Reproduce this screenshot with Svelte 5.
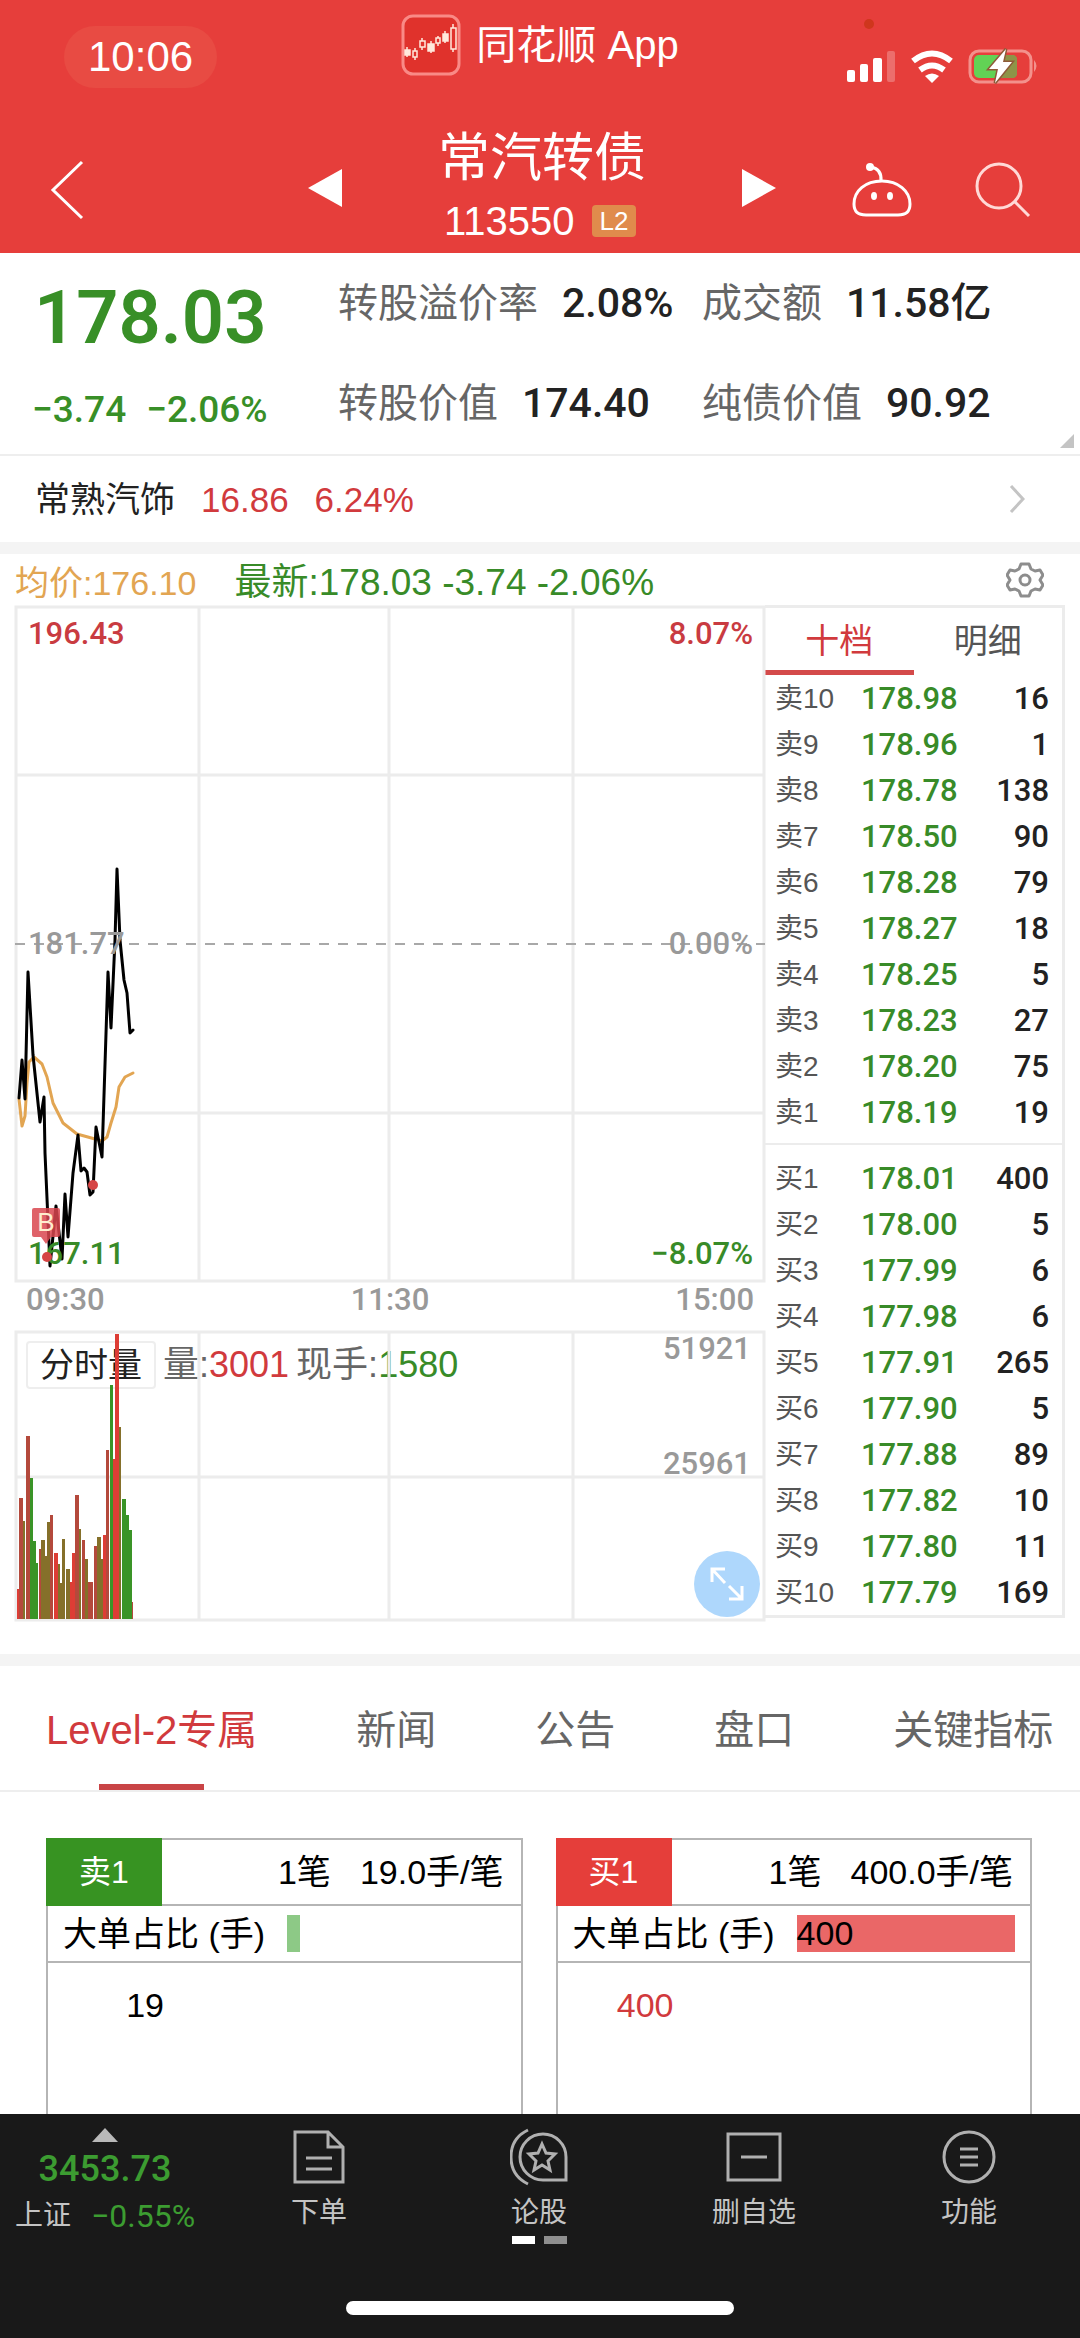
<script lang="ts">
    type Level = [string, string, number]

    const sells: Level[] = [
        ['卖10', '178.98', 16],
        ['卖9', '178.96', 1],
        ['卖8', '178.78', 138],
        ['卖7', '178.50', 90],
        ['卖6', '178.28', 79],
        ['卖5', '178.27', 18],
        ['卖4', '178.25', 5],
        ['卖3', '178.23', 27],
        ['卖2', '178.20', 75],
        ['卖1', '178.19', 19],
    ]

    const buys: Level[] = [
        ['买1', '178.01', 400],
        ['买2', '178.00', 5],
        ['买3', '177.99', 6],
        ['买4', '177.98', 6],
        ['买5', '177.91', 265],
        ['买6', '177.90', 5],
        ['买7', '177.88', 89],
        ['买8', '177.82', 10],
        ['买9', '177.80', 11],
        ['买10', '177.79', 169],
    ]

    // price line and average line, in chart units
    const price = '4,492 7,454 10,493 13,366 18,449 25,516 29,491 30,547 35,660 41,600 47,653 50,588 53,631 58,567 63,529 66,565 69,562 72,566 75,589 78,586 81,521 87,551 93,366 96,422 100,334 102,263 105,334 109,374 112,387 115,427 118,424'
    const average = '4,493 7,520 10,510 12,477 14,456 19,451 27,458 32,471 38,497 48,517 62,528 80,533 87,535 92,531 96,517 101,501 104,481 110,471 118,467'

    const r = '#dd3d35'
    const g = '#3a9427'
    const o = '#85702a'
    const b = '#b4493c'

    // x, width, height, colour
    const bars: [number, number, number, string][] = [
        [2, 2, 30, r], [4, 4, 121, b], [8, 2, 98, o], [11, 4, 183, b], [15, 3, 141, g],
        [18, 3, 78, g], [21, 2, 56, g], [24, 2, 70, b], [26, 4, 79, o], [30, 2, 63, o],
        [32, 3, 97, o], [35, 3, 104, b], [39, 4, 66, r], [43, 2, 55, o], [45, 2, 36, o],
        [47, 3, 80, o], [51, 4, 50, o], [55, 2, 37, r], [57, 3, 66, r], [60, 4, 124, b],
        [64, 2, 90, o], [67, 3, 79, b], [70, 3, 60, o], [73, 5, 37, b], [79, 3, 73, b],
        [82, 4, 82, o], [86, 2, 60, o], [88, 3, 84, r], [91, 3, 169, b], [95, 3, 234, g],
        [98, 2, 160, r], [100, 4, 285, r], [104, 2, 192, o], [107, 4, 120, g], [111, 3, 104, g],
        [114, 3, 89, g], [117, 1, 17, b],
    ]

    const tabs = ['Level-2专属', '新闻', '公告', '盘口', '关键指标']
    let activeTab = 0
    let bookTab = 0

    const queues = [
        { side: 'sell', name: '卖1', avg: '19.0手/笔', ratio: 6, big: '', first: 19 },
        { side: 'buy', name: '买1', avg: '400.0手/笔', ratio: 100, big: '400', first: 400 },
    ]
</script>

<div class="page">
    <header>
        <div class="status">
            <span class="clock">10:06</span>
            <div class="brand">
                <svg width="60" height="62" viewBox="0 0 60 62" fill="none">
                    <rect x="2" y="2" width="56" height="58" rx="10" fill="#e0322c" stroke="#f98a86" stroke-width="3" />
                    <g stroke="#ffe9dc" stroke-width="1.5">
                        <path d="M6 33v10M14 34v12M21 24v12M30 27v12M37 22v10M44 17v12M52 10v28" />
                        <path fill="#ffe9dc" d="M4 36h5v5H4zM27 30h6v7h-6zM42 20h5v7h-5z" />
                        <path fill="#e0322c" d="M12 37h4v6h-4zM19 27h5v6h-5zM35 24h4v5h-4zM50 14h5v21h-5z" />
                    </g>
                </svg>
                <span>同花顺 App</span>
            </div>
            <div class="signals">
                <svg width="192" height="70" viewBox="0 0 192 70" fill="none">
                    <circle cx="23" cy="8" r="5" fill="#cf361d" />
                    <g fill="#fff">
                        <rect x="1" y="54" width="8" height="12" rx="2" />
                        <rect x="14" y="48" width="8" height="18" rx="2" />
                        <rect x="27" y="42" width="9" height="24" rx="2" />
                        <rect x="41" y="35" width="8" height="31" rx="2" opacity=".25" />
                    </g>
                    <path d="M67 45q19-15 38 0M74 54q12-9 24 0" stroke="#fff" stroke-width="6" />
                    <path d="M79 60q7-5 14 0l-7 7z" fill="#fff" />
                    <rect x="124" y="35" width="61" height="31" rx="9" stroke="#f3918c" stroke-width="3" />
                    <rect x="128" y="39" width="43" height="23" rx="5" fill="#62d255" />
                    <path d="M155 39h11q5 0 5 5v13q0 5-5 5h-14z" fill="#8e9448" />
                    <path d="M188 44q5 6 0 12z" fill="#f3918c" />
                    <path d="M160 33l-17 20h9l-3 14 17-21h-9z" fill="#fff" stroke="#8f5a38" stroke-width="3" paint-order="stroke" />
                </svg>
            </div>
        </div>
        <div class="nav">
            <button class="back" aria-label="返回">
                <svg width="34" height="60" viewBox="0 0 34 60" fill="none" stroke="#fff" stroke-width="3"><path d="M32 2L3 30l29 28" /></svg>
            </button>
            <div class="switcher">
                <button aria-label="上一个">
                    <svg width="34" height="38" viewBox="0 0 34 38"><path d="M0 19L34 0v38z" fill="#fff" /></svg>
                </button>
                <div class="title">
                    <h1>常汽转债</h1>
                    <p>113550 <span class="l2">L2</span></p>
                </div>
                <button aria-label="下一个">
                    <svg width="34" height="38" viewBox="0 0 34 38"><path d="M34 19L0 0v38z" fill="#fff" /></svg>
                </button>
            </div>
            <div class="tools">
                <button aria-label="助手">
                    <svg width="60" height="56" viewBox="0 0 60 56" fill="none" stroke="#fff" stroke-width="3">
                        <path d="M29 19q1-12-10-14" />
                        <circle cx="18" cy="5" r="4" fill="#fff" stroke="none" />
                        <path d="M30 19C13 19 2 29 2 42c0 8 4 11 12 11h32c8 0 12-3 12-11 0-13-12-23-28-23z" />
                        <g fill="#fff" stroke="none"><ellipse cx="22" cy="34" rx="3" ry="4" /><ellipse cx="38" cy="34" rx="3" ry="4" /></g>
                    </svg>
                </button>
                <button aria-label="搜索">
                    <svg width="56" height="56" viewBox="0 0 56 56" fill="none" stroke="#ffd9d6" stroke-width="3"><circle cx="24" cy="24" r="22" /><path d="M40 40l14 14" /></svg>
                </button>
            </div>
        </div>
    </header>

    <section class="quote">
        <div class="now">
            <strong>178.03</strong>
            <p><span>−3.74</span><span>−2.06%</span></p>
        </div>
        <dl>
            <div><dt>转股溢价率</dt><dd>2.08%</dd></div>
            <div><dt>成交额</dt><dd>11.58亿</dd></div>
            <div><dt>转股价值</dt><dd>174.40</dd></div>
            <div><dt>纯债价值</dt><dd>90.92</dd></div>
        </dl>
        <i class="corner"></i>
    </section>

    <a class="stock" href="#stock">
        <span>常熟汽饰</span>
        <span class="red">16.86</span>
        <span class="red">6.24%</span>
        <svg width="16" height="30" viewBox="0 0 16 30" fill="none" stroke="#c4c4c4" stroke-width="3"><path d="M2 2l12 13L2 28" /></svg>
    </a>

    <div class="band"></div>

    <div class="info">
        <span class="avg">均价:176.10</span>
        <span class="last">最新:178.03 -3.74 -2.06%</span>
        <button aria-label="设置">
            <svg width="38" height="38" viewBox="0 0 38 38" fill="none" stroke="#8d8d8d" stroke-width="3" stroke-linejoin="round">
                <path d="M15 3h8l2 5 4 2 5-1 3 5-3 5 3 5-3 5-5-1-4 2-2 5h-8l-2-5-4-2-5 1-3-5 3-5-3-5 3-5 5 1 4-2z" />
                <circle cx="19" cy="19" r="5" />
            </svg>
        </button>
    </div>

    <main>
        <div class="charts">
            <svg class="chart" viewBox="0 0 750 676">
                <path class="grid" d="M1 1H749V675H1zM184 1V675M374 1V675M558 1V675M1 169H749M1 507H749" />
                <path d="M0 338H750" stroke="#a8a8a8" stroke-width="2" stroke-dasharray="10 9" />
                <text x="13" y="38" class="up">196.43</text>
                <text x="738" y="38" class="up end">8.07%</text>
                <polyline points={average} stroke="#e2a552" />
                <polyline points={price} stroke="#000" stroke-width="4" />
                <text x="13" y="348" class="flat">181.77</text>
                <text x="738" y="348" class="flat end">0.00%</text>
                <text x="13" y="658" class="down">167.11</text>
                <text x="738" y="658" class="down end">−8.07%</text>
                <circle cx="32" cy="651" r="5" fill="#d64545" />
                <circle cx="78" cy="579" r="5" fill="#d64545" />
                <path d="M19 602H43q2 0 2 2V629q0 2-2 2H36l-5 7-5-7H19q-2 0-2-2V604q0-2 2-2z" fill="#d9474f" opacity=".85" />
                <text x="31" y="625" class="mark">B</text>
            </svg>
            <div class="axis"><span>09:30</span><span>11:30</span><span>15:00</span></div>
            <div class="volume">
                <div class="legend">
                    <button>分时量</button>
                    <span>量:<b class="red">3001</b></span>
                    <span>现手:<b class="green">1580</b></span>
                </div>
                <svg class="chart" viewBox="0 0 750 290">
                    <path class="grid" d="M1 1H749V289H1zM184 1V289M374 1V289M558 1V289M1 146H749" />
                    {#each bars as [x, w, h, fill]}
                        <rect {x} y={288 - h} width={w} height={h} {fill} />
                    {/each}
                    <text x="736" y="28" class="flat end">51921</text>
                    <text x="736" y="143" class="flat end">25961</text>
                </svg>
                <button class="expand" aria-label="全屏">
                    <svg width="34" height="34" viewBox="0 0 34 34" fill="none" stroke="#fff" stroke-width="3"><path d="M2 15V2h13M2 2l13 14M32 19v13H19M32 32L19 19" /></svg>
                </button>
            </div>
        </div>

        <div class="book">
            <div class="booktabs">
                <button class:on={bookTab == 0} on:click={() => bookTab = 0}>十档</button>
                <button class:on={bookTab == 1} on:click={() => bookTab = 1}>明细</button>
            </div>
            {#each [sells, buys] as side}
                <table>
                    <tbody>
                        {#each side as [name, value, volume]}
                            <tr><th scope="row">{name}</th><td class="green">{value}</td><td>{volume}</td></tr>
                        {/each}
                    </tbody>
                </table>
            {/each}
        </div>
    </main>

    <div class="band"></div>

    <nav class="tabs">
        {#each tabs as tab, i}
            <button class:on={activeTab == i} on:click={() => activeTab = i}>{tab}</button>
        {/each}
    </nav>

    <section class="queues">
        {#each queues as q}
            <article class={q.side}>
                <div class="head"><span class="badge">{q.name}</span><span class="count">1笔</span><span>{q.avg}</span></div>
                <div class="ratio"><span>大单占比 (手)</span><div class="track"><div class="bar" style="width: {q.ratio}%">{q.big}</div></div></div>
                <p>{q.first}</p>
            </article>
        {/each}
    </section>

    <footer>
        <div class="menu">
            <button class="index">
                <i class="caret"></i>
                <strong>3453.73</strong>
                <span class="line"><span>上证</span><em>−0.55%</em></span>
            </button>
            <button>
                <svg width="58" height="58" viewBox="0 0 58 58"><path d="M5 4H38L53 19V54H5zM38 4V19H53M16 30H42M16 41H42" /></svg>
                下单
            </button>
            <button>
                <svg width="58" height="58" viewBox="0 0 58 58"><path d="M18 2Q1 10 1 29T18 56M56 52V29a23 23 0 1 0-23 23zM32 16l4 9 9 1-7 7 2 9-8-5-8 5 2-9-7-7 9-1z" /></svg>
                论股
                <span class="dots"><i></i><i></i></span>
            </button>
            <button>
                <svg width="58" height="58" viewBox="0 0 58 58"><path d="M3 6H55V52H3zM16 29H42" /></svg>
                删自选
            </button>
            <button>
                <svg width="58" height="58" viewBox="0 0 58 58"><circle cx="29" cy="29" r="25" /><path d="M20 21H38M20 29H38M20 37H38" /></svg>
                功能
            </button>
        </div>
        <div class="home"></div>
    </footer>
</div>

<style>
    :global(body) {
        margin: 0;
        background: #fff;
    }

    .page {
        --din: Roboto, "Noto Sans CJK SC", sans-serif;
        display: flex;
        flex-direction: column;
        min-height: 100vh;
        font-family: "Liberation Sans", "Noto Sans CJK SC", sans-serif;
        font-size: 34px;
        line-height: 1;
        color: #222;
    }

    button {
        padding: 0;
        border: 0;
        background: none;
        color: inherit;
        font: inherit;
    }

    svg {
        display: block;
    }

    h1, p, dl, dd {
        margin: 0;
        font-weight: 400;
    }

    .red {
        color: #d13a3d;
    }

    .green {
        color: #388b28;
    }

    header {
        background: #e63e3b;
        color: #fff;
    }

    .status {
        display: grid;
        grid-template-columns: 1fr auto 1fr;
        height: 90px;
    }

    .clock {
        justify-self: start;
        align-self: end;
        margin: 0 0 2px 64px;
        padding: 10px 24px;
        border-radius: 32px;
        background: #e84b43;
        font-size: 42px;
    }

    .brand {
        display: flex;
        align-items: center;
        align-self: start;
        gap: 15px;
        margin-top: 14px;
        font-size: 40px;
        line-height: 62px;
    }

    .signals {
        justify-self: end;
        margin: 16px 42px 0 0;
    }

    .nav {
        display: grid;
        grid-template-columns: 1fr auto 1fr;
        align-items: center;
        height: 163px;
    }

    .back {
        justify-self: start;
        margin-left: 50px;
        padding-top: 36px;
    }

    .switcher {
        display: flex;
        align-items: center;
        gap: 96px;
        padding-left: 4px;
    }

    .switcher > button {
        padding-top: 32px;
    }

    .title {
        padding-top: 26px;
        text-align: center;
    }

    h1 {
        font-size: 52px;
        line-height: 72px;
    }

    .title p {
        display: flex;
        align-items: center;
        gap: 17px;
        padding-left: 6px;
        font-size: 40px;
        line-height: 54px;
    }

    .l2 {
        padding: 0 8px;
        border-radius: 4px;
        background: #e08b4c;
        font-size: 26px;
        line-height: 32px;
    }

    .tools {
        display: flex;
        justify-self: end;
        gap: 63px;
        margin-right: 49px;
        padding-top: 36px;
    }

    .quote {
        position: relative;
        display: flex;
        height: 201px;
        border-bottom: 2px solid #eee;
    }

    .now {
        width: 338px;
        color: #388f27;
        font-family: var(--din);
        font-weight: 500;
    }

    .now strong {
        display: block;
        margin: 25px 0 0 34px;
        font-size: 74px;
        font-weight: 600;
        line-height: 80px;
    }

    .now p {
        display: flex;
        gap: 20px;
        margin: 30px 0 0 32px;
        font-size: 37px;
        font-weight: 500;
        line-height: 44px;
    }

    dl {
        display: grid;
        grid-template-columns: 364px auto;
        align-content: start;
        row-gap: 40px;
        margin-top: 20px;
    }

    dl div {
        display: flex;
        align-items: center;
        gap: 24px;
        height: 60px;
    }

    dt {
        color: #666;
        font-size: 40px;
    }

    dd {
        color: #222;
        font-family: var(--din);
        font-size: 41px;
        font-weight: 500;
    }

    .corner {
        position: absolute;
        right: 6px;
        bottom: 6px;
        border: 7px solid;
        border-color: transparent #c4c4c4 #c4c4c4 transparent;
    }

    .stock {
        display: flex;
        align-items: center;
        gap: 26px;
        height: 86px;
        padding: 0 55px 0 35px;
        color: #222;
        font-size: 35px;
        text-decoration: none;
    }

    .stock .red {
        color: #d13a3d;
    }

    .stock svg {
        margin-left: auto;
    }

    .band {
        height: 12px;
        background: #f4f4f4;
    }

    .info {
        display: flex;
        align-items: center;
        gap: 38px;
        height: 51px;
        padding: 6px 36px 0 15px;
        box-sizing: border-box;
    }

    .avg {
        color: #e2a552;
    }

    .last {
        color: #388b28;
        font-size: 37px;
    }

    .info button {
        margin-left: auto;
        padding-bottom: 6px;
    }

    main {
        display: grid;
        grid-template-columns: 750fr 300fr;
        padding: 0 15px 33px;
    }

    .charts {
        padding-top: 1px;
    }

    .chart {
        position: relative;
        width: 100%;
        overflow: visible;
        font-family: var(--din);
        font-size: 31px;
        font-weight: 500;
    }

    .grid {
        fill: none;
        stroke: #ececec;
        stroke-width: 3;
    }

    polyline {
        fill: none;
        stroke-width: 3;
        stroke-linejoin: round;
        stroke-linecap: round;
    }

    .end {
        text-anchor: end;
    }

    .up {
        fill: #c93b41;
    }

    .flat {
        fill: #999;
    }

    .down {
        fill: #388b28;
    }

    .mark {
        fill: #ffeecf;
        font-family: "Liberation Sans", sans-serif;
        font-size: 26px;
        font-weight: 400;
        text-anchor: middle;
    }

    .axis {
        display: flex;
        justify-content: space-between;
        height: 49px;
        padding: 0 11px;
        color: #999;
        font-family: var(--din);
        font-size: 31px;
        font-weight: 500;
        line-height: 36px;
    }

    .volume {
        position: relative;
    }

    .legend {
        position: absolute;
        top: 10px;
        left: 11px;
        display: flex;
        align-items: center;
        gap: 7px;
        color: #666;
        font-size: 36px;
    }

    .legend button {
        width: 130px;
        height: 48px;
        border: 2px solid #eee;
        border-radius: 4px;
        color: #222;
        font-size: 34px;
    }

    .legend b {
        font-weight: 400;
    }

    .expand {
        position: absolute;
        right: 5px;
        bottom: 4px;
        display: grid;
        place-items: center;
        width: 66px;
        height: 66px;
        border-radius: 50%;
        background: #aed7fc;
    }

    .book {
        align-self: start;
        border: 3px solid #ececec;
        border-left: 0;
    }

    .booktabs {
        display: flex;
        height: 67px;
        color: #555;
    }

    .booktabs button {
        flex: 1;
        padding-top: 4px;
        border-bottom: 5px solid transparent;
    }

    .booktabs .on {
        border-color: #d44a4a;
        color: #d13a3d;
    }

    table {
        width: 100%;
        padding-bottom: 8px;
        border-spacing: 0;
        border-bottom: 2px solid #ececec;
    }

    table + table {
        padding: 10px 0 0;
        border: 0;
    }

    tr {
        height: 46px;
    }

    th {
        width: 86px;
        padding: 2px 0 0 10px;
        color: #555;
        font-size: 28px;
        font-weight: 400;
        text-align: left;
    }

    td {
        padding: 0 13px 0 6px;
        font-family: var(--din);
        font-size: 31px;
        font-weight: 500;
        text-align: right;
    }

    td.green {
        padding: 0;
        text-align: left;
    }

    .tabs {
        display: flex;
        gap: 99px;
        height: 126px;
        padding-left: 46px;
        border-bottom: 2px solid #eee;
        box-sizing: border-box;
        overflow: hidden;
        color: #666;
        font-size: 40px;
        white-space: nowrap;
    }

    .tabs button {
        position: relative;
        padding-top: 4px;
    }

    .tabs .on {
        color: #d13a3d;
    }

    .tabs .on::after {
        content: "";
        position: absolute;
        bottom: 0;
        left: 25%;
        width: 50%;
        height: 6px;
        background: #c94446;
    }

    .queues {
        flex: 1;
        display: grid;
        grid-template-columns: 1fr 1fr;
        gap: 33px;
        min-height: 270px;
        padding: 46px 48px 0 46px;
        color: #000;
    }

    article {
        border: 2px solid #b5b5b5;
        border-bottom: 0;
    }

    .head {
        display: flex;
        align-items: center;
        gap: 29px;
        height: 64px;
        padding-right: 17px;
        border-bottom: 2px solid #b5b5b5;
    }

    .badge {
        width: 116px;
        margin: -2px 0 -2px -2px;
        color: #fff;
        font-size: 32px;
        line-height: 68px;
        text-align: center;
    }

    .sell .badge {
        background: #379322;
    }

    .buy .badge {
        background: #e53e3a;
    }

    .count {
        margin-left: auto;
    }

    .ratio {
        display: flex;
        align-items: center;
        gap: 22px;
        height: 55px;
        padding: 0 15px;
        border-bottom: 2px solid #b5b5b5;
    }

    .track {
        flex: 1;
    }

    .bar {
        height: 37px;
        line-height: 37px;
    }

    .sell .bar {
        background: #8dc986;
    }

    .buy .bar {
        background: #ea6767;
    }

    article p {
        width: 116px;
        padding-top: 25px;
        text-align: right;
    }

    .buy p {
        color: #d13a3d;
    }

    footer {
        background: #191919;
        color: #c4c4c4;
    }

    .menu {
        display: grid;
        grid-template-columns: 210fr 218fr 222fr 208fr 222fr;
        height: 187px;
    }

    .menu button {
        display: flex;
        flex-direction: column;
        align-items: center;
        padding-top: 14px;
        font-size: 28px;
        line-height: 54px;
    }

    .menu svg {
        fill: none;
        stroke: #b0b0b0;
        stroke-width: 3;
    }

    .dots {
        display: flex;
        gap: 9px;
        margin-top: -4px;
    }

    .dots i {
        width: 23px;
        height: 8px;
        background: #fff;
    }

    .dots i + i {
        background: #8f8f8f;
    }

    .caret {
        border: 13px solid transparent;
        border-top: 0;
        border-bottom: 14px solid #b9b9b9;
    }

    .index strong {
        color: #3c9c31;
        font-family: var(--din);
        font-size: 36px;
        font-weight: 500;
    }

    .index .line {
        display: flex;
        gap: 20px;
        line-height: 40px;
    }

    em {
        color: #3c9c31;
        font-family: var(--din);
        font-size: 32px;
        font-style: normal;
    }

    .home {
        width: 36%;
        height: 14px;
        margin: 0 auto 23px;
        border-radius: 7px;
        background: #fff;
    }
</style>
